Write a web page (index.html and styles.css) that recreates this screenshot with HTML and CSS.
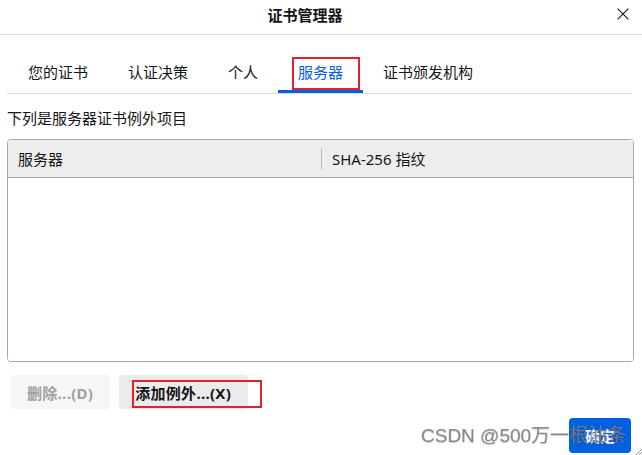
FILE: index.html
```html
<!DOCTYPE html>
<html lang="zh-CN">
<head>
<meta charset="utf-8">
<title>证书管理器</title>
<link rel="stylesheet" href="styles.css">
</head>
<body>
<div class="dialog">
  <header class="header">
    <div class="title">证书管理器</div>
    <button class="close" aria-label="关闭"><svg width="12" height="12" viewBox="0 0 12 12"><path d="M0.6 0.6L11.4 11.4M11.4 0.6L0.6 11.4" stroke="#15141a" stroke-width="1.1" fill="none"/></svg></button>
  </header>
  <main class="content">
    <nav class="tabs">
      <div class="tab">您的证书</div>
      <div class="tab">认证决策</div>
      <div class="tab">个人</div>
      <div class="tab selected">服务器<span class="mark mark-tab"></span></div>
      <div class="tab">证书颁发机构</div>
    </nav>
    <p class="desc">下列是服务器证书例外项目</p>
    <div class="table">
      <div class="thead">
        <div class="th">服务器</div>
        <div class="th th-sep">SHA-256 指纹</div>
      </div>
      <div class="tbody"></div>
    </div>
    <div class="actions">
      <button class="btn" disabled>删除...(D)</button>
      <button class="btn">添加例外...(X)<span class="mark mark-btn"></span></button>
    </div>
  </main>
  <footer class="footer">
    <button class="primary">确定</button>
  </footer>
  <div class="watermark">CSDN @500万一根油条</div>
  <svg class="grip" width="7" height="7" viewBox="0 0 7 7"><path d="M7 1L1 7M7 4L4 7" stroke="#9a9a9a" stroke-width="1" fill="none"/></svg>
</div>
</body>
</html>
```

FILE: styles.css
```css
* { box-sizing: border-box; }

html, body {
  margin: 0;
  padding: 0;
  background: #ffffff;
}

body {
  width: 642px;
  height: 455px;
  overflow: hidden;
  font-family: "Noto Sans", "Noto Sans CJK SC", sans-serif;
  font-size: 15px;
  color: #15141a;
}

.dialog {
  position: relative;
  width: 642px;
  height: 455px;
}

.header {
  display: grid;
  grid-template-columns: 1fr 32px;
  height: 35px;
  border-bottom: 1px solid #d9d9dc;
}

.title {
  font-weight: 700;
  text-align: center;
  line-height: 20px;
  padding-top: 5px;
  font-family: "Noto Sans CJK SC", sans-serif;
}

.close {
  border: 0;
  background: transparent;
  padding: 8px 0 0 7px;
  margin: 0;
  display: flex;
  align-items: flex-start;
  justify-content: flex-start;
}

.content {
  padding: 0 8px 0 7px;
}

.tabs {
  display: flex;
  margin-top: 17px;
  margin-right: 3px;
  padding-left: 1px;
  border-bottom: 1px solid #d9d9dc;
}

.tab {
  position: relative;
  padding: 10px 20px 8px;
  line-height: 20px;
  border-bottom: 3px solid transparent;
  font-family: "Noto Sans CJK SC", sans-serif;
  white-space: nowrap;
}

.tab.selected {
  color: #0061e0;
  border-bottom-color: #0061e0;
}

.mark {
  position: absolute;
  border: 2px solid #e3202b;
  pointer-events: none;
}

.mark-tab {
  left: 14px;
  top: 5px;
  width: 68px;
  height: 33px;
}

.desc {
  margin: 14px 0 11px 0;
  line-height: 20px;
  font-family: "Noto Sans CJK SC", sans-serif;
}

.table {
  border: 1px solid #a8a8a8;
  border-radius: 4px;
  overflow: hidden;
}

.thead {
  display: grid;
  grid-template-columns: 313px 1fr;
  align-items: center;
  height: 38px;
  background: #ededed;
  border-bottom: 1px solid #a8a8a8;
}

.th {
  height: 22px;
  line-height: 22px;
  padding-left: 10px;
  white-space: nowrap;
}

.th-sep {
  border-left: 1px solid #b8b8b8;
}

.tbody {
  height: 183px;
  background: #ffffff;
}

.actions {
  display: flex;
  gap: 9px;
  margin-top: 13px;
  padding-left: 4px;
}

.btn {
  position: relative;
  height: 34px;
  padding: 0 17px 0 16px;
  border: 0;
  border-radius: 4px;
  background: #ebebeb;
  color: #15141a;
  font-family: "Noto Sans", "Noto Sans CJK SC", sans-serif;
  font-size: 15px;
  font-weight: 700;
  letter-spacing: 0.3px;
  white-space: nowrap;
}

.btn:disabled {
  background: #f6f6f6;
  color: #a0a0a0;
}

.mark-btn {
  left: 13px;
  top: 5px;
  width: 130px;
  height: 28px;
}

.footer {
  display: flex;
  justify-content: flex-end;
  margin-top: 9px;
  padding-right: 11px;
}

.primary {
  height: 35px;
  padding: 0 16px;
  border: 0;
  border-radius: 4px;
  background: #0061e0;
  color: #ffffff;
  font-family: "Noto Sans CJK SC", sans-serif;
  font-size: 15px;
  font-weight: 700;
}

.watermark {
  position: absolute;
  left: 421px;
  top: 425px;
  font-family: "Liberation Sans", "Noto Sans CJK SC", sans-serif;
  font-size: 19px;
  line-height: 22px;
  color: rgba(125, 125, 125, 0.9);
  text-shadow: 0 1px 1px rgba(0, 0, 0, 0.2);
  white-space: nowrap;
  pointer-events: none;
}

.grip {
  position: absolute;
  right: 0;
  bottom: 0;
}
```
